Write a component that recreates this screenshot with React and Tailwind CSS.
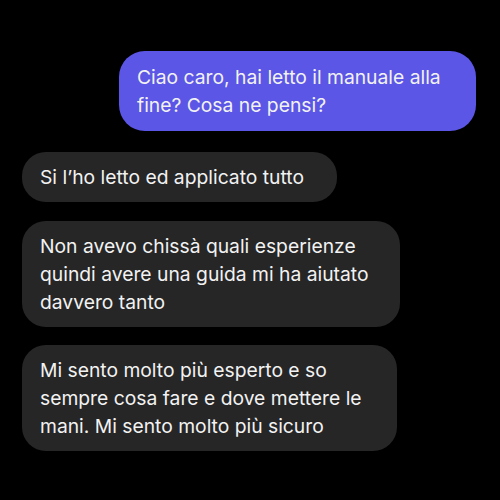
import React from 'react';

const messages = [
  { me: true, w: 'w-[357px]', lines: ['Ciao caro, hai letto il manuale alla', 'fine? Cosa ne pensi?'] },
  { me: false, w: 'w-[315px]', lines: ['Si l’ho letto ed applicato tutto'] },
  { me: false, w: 'w-[378px]', lines: ['Non avevo chissà quali esperienze', 'quindi avere una guida mi ha aiutato', 'davvero tanto'] },
  { me: false, w: 'w-[375px]', lines: ['Mi sento molto più esperto e so', 'sempre cosa fare e dove mettere le', 'mani. Mi sento molto più sicuro'] },
];

const Bubble = ({ me, w, lines }) => (
  <div
    className={`${w} ${me ? 'self-end bg-[#5b56e6] rounded-[26px] py-3' : 'self-start bg-[#262626] rounded-[24px] py-[11px]'} px-[18px] text-[19.3px] leading-[28px] text-[#f2f2f2] whitespace-nowrap`}
  >
    {lines.map((l, i) => (
      <div key={i}>{l}</div>
    ))}
  </div>
);

export default function App() {
  return (
    <div className="w-[500px] h-[500px] bg-black overflow-hidden font-['Inter','Noto_Sans',sans-serif]">
      <div className="flex flex-col pt-[51px] pl-[22px] pr-[24px]">
        <Bubble {...messages[0]} />
        <div className="mt-[21px]">
          <Bubble {...messages[1]} />
        </div>
        <div className="flex flex-col gap-[18px] mt-[19px]">
          <Bubble {...messages[2]} />
          <Bubble {...messages[3]} />
        </div>
      </div>
    </div>
  );
}
